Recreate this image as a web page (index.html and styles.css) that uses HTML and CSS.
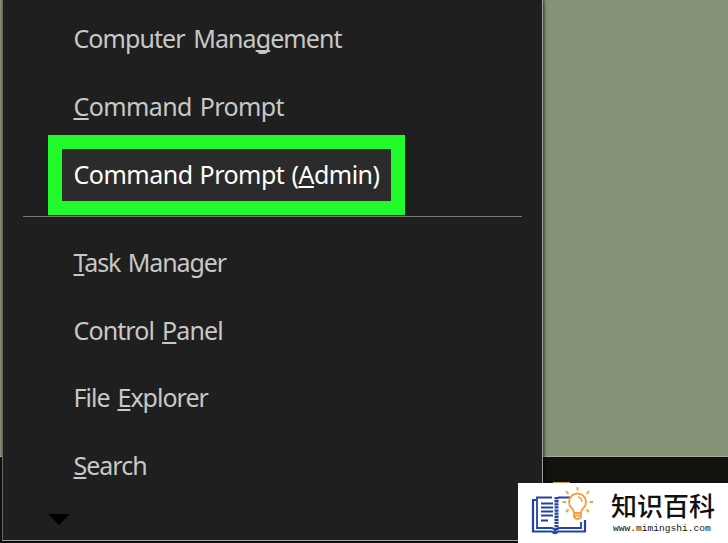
FILE: index.html
```
<!DOCTYPE html>
<html lang="en">
	<head>
		<meta charset="UTF-8" />
		<title>Power user menu</title>
		<link rel="stylesheet" href="styles.css">
	</head>
	<body>
		<div class="desktop">
			<ul class="menu">
				<li><span class="management">Computer Mana<u>g</u>ement</span></li>
				<li><span class="prompt"><u>C</u>ommand Prompt</span></li>
				<li class="active"><span class="admin">Command Prompt (<u>A</u>dmin)</span></li>
				<li class="line"></li>
				<li><span class="task"><u>T</u>ask Manager</span></li>
				<li><span class="panel">Control <u>P</u>anel</span></li>
				<li><span class="explorer">File <u>E</u>xplorer</span></li>
				<li><span class="search"><u>S</u>earch</span></li>
				<li class="more"></li>
			</ul>
		</div>
		<div class="taskbar"><div class="folder"></div></div>
		<div class="logo">
			<svg class="book" width="66" height="50" viewBox="0 0 66 50" fill="none">
				<g stroke="#2441a5">
					<path d="M6 13H3V44.500H22Q25 48 28 44.500H55V33" stroke-width="2.200" />
					<path d="M22 10.500H7V41H21Q25 41 25 45Q26 41 30 41H51V35M28 10.500H40" stroke-width="1.800" />
					<path d="M11 16.500H23M11 20.500H23M11 24.500H23M11 28.500H23M11 33.500H18" stroke-width="1.800" />
					<path d="M26.500 10V43" stroke-width="4" stroke-dasharray="2.300 .8" />
				</g>
				<g stroke="#f5a13a" stroke-width="1.900">
					<path d="M44 26Q44 23 41.500 21A8.500 8.500 0 1 1 53.500 21Q51 23 51 26ZM44 26V30Q47.500 34 51 30V26M44 28.500H51" />
					<path d="M48 10Q52 11 52 15" stroke-width="1.400" />
					<path d="M47.500 0V3.500M36 4L38.500 7M59 4L56.500 7M32.500 15H36M59.500 15H63M36 25L38.500 22.500M59 25L56.500 22.500" />
				</g>
			</svg>
			<div class="words">
				<div class="name">知识百科</div>
				<div class="url">www.mimingshi.com</div>
			</div>
		</div>
	</body>
</html>
```
FILE: styles.css
```
body{
	margin: 0;
	width: 728px;
	height: 543px;
	position: relative;
	overflow: hidden;
	background: #11110d;
	font: 25px/1 "Noto Sans", "Open Sans", sans-serif;
	color: #c8c8c8;
}
.desktop{
	height: 456px;
	background: #849275;
	border-bottom: 1px solid #a3ad98;
}
.menu{
	position: relative;
	z-index: 1;
	box-sizing: border-box;
	width: 541px;
	height: 541px;
	margin: 0 0 0 2px;
	padding: 6px 0 0;
	list-style: none;
	background: #1f1f1f;
	border: solid #a0a0a0;
	border-width: 0 1px 1px;
	border-left-color: #666;
	box-shadow: 1px 0 3px rgba(0,0,0,.7);
}
.menu li{
	display: flex;
	align-items: center;
	box-sizing: border-box;
	height: 67.800px;
	padding: 0 0 2px 70.500px;
	white-space: nowrap;
}
.menu u{
	text-decoration-thickness: 1.500px;
	text-underline-offset: 2px;
	text-decoration-skip-ink: none;
}
.menu li.active{
	width: 357px;
	height: 80px;
	margin: -6.600px 0 -5.600px 45px;
	padding: 0 0 2px 11.500px;
	border: 14px solid #21fb2c;
	background: #2b2b2b;
	color: #fff;
}
.menu li.line{
	height: 1.500px;
	margin: 6.500px 20px 12px;
	padding: 0;
	background: #777;
}
.menu li.more{
	width: 0;
	height: 0;
	margin: 13.500px 0 0 45px;
	padding: 0;
	border: solid transparent;
	border-width: 11px 11px 0;
	border-top-color: #000;
}
.management{
	letter-spacing: -.930px;
	word-spacing: 3px;
}
.prompt{
	letter-spacing: -.600px;
	word-spacing: 2px;
}
.admin{
	letter-spacing: -.500px;
	word-spacing: 1px;
}
.task{
	letter-spacing: -1.100px;
	word-spacing: 2px;
}
.panel{
	letter-spacing: -.900px;
	word-spacing: 2.500px;
}
.explorer{
	letter-spacing: -1px;
	word-spacing: 2.500px;
}
.search{
	letter-spacing: -1px;
}
.taskbar{
	height: 86px;
}
.folder{
	position: absolute;
	left: 553px;
	top: 482px;
	width: 17px;
	height: 3px;
	background: #c89c47;
}
.logo{
	position: absolute;
	z-index: 2;
	left: 518px;
	top: 483px;
	display: flex;
	box-sizing: border-box;
	width: 210px;
	height: 60px;
	padding: 4px 0 0 12px;
	background: #fff;
	color: #111;
}
.book{
	flex: none;
}
.words{
	padding: 0 0 0 15px;
}
.name{
	font: 500 26px/36px "Noto Sans CJK SC", sans-serif;
	white-space: nowrap;
}
.url{
	padding-left: 2px;
	font: 9.600px/12px "Liberation Mono", monospace;
	white-space: nowrap;
}
```
